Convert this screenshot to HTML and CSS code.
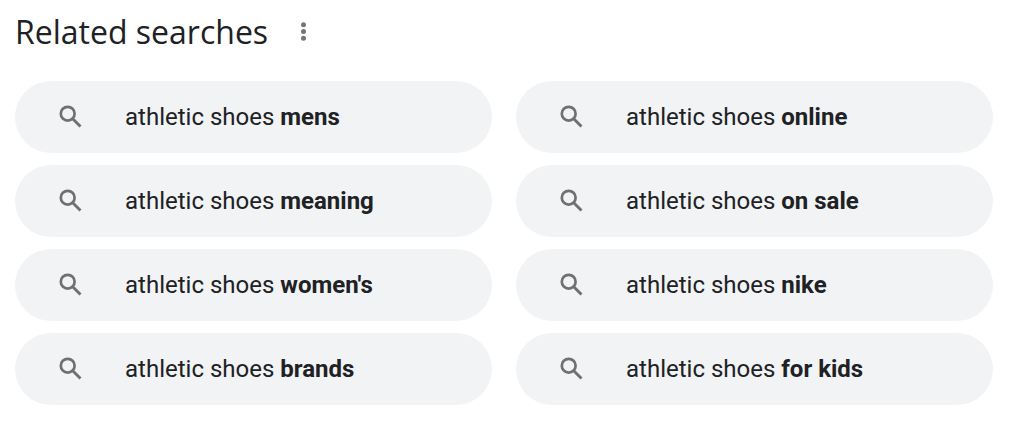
FILE: index.html
```
<!DOCTYPE html>
<html lang="en">
<head>
  <meta charset="UTF-8">
  <meta name="viewport" content="width=device-width, initial-scale=1">
  <title>Related searches</title>
  <link rel="stylesheet" href="styles.css">
</head>
<body>

<svg class="sprite" aria-hidden="true">
  <symbol id="search" viewBox="0 0 30 30">
    <circle cx="11.7" cy="11.7" r="6.9" fill="none" stroke="currentColor" stroke-width="2.7"/>
    <path d="M16.2 16.2l8.3 8.3" fill="none" stroke="currentColor" stroke-width="2.9"/>
  </symbol>
</svg>

<section class="related">
  <header class="related-header">
    <h2>Related searches</h2>
    <button class="more" type="button" aria-label="About this result">
      <svg viewBox="0 0 26 26"><circle cx="13.5" cy="5.7" r="2.5"/><circle cx="13.5" cy="12.5" r="2.5"/><circle cx="13.5" cy="19.3" r="2.5"/></svg>
    </button>
  </header>

  <nav class="searches" aria-label="Related searches">
    <a class="pill" href="#"><svg><use href="#search"/></svg><span>athletic shoes <b>mens</b></span></a>
    <a class="pill" href="#"><svg><use href="#search"/></svg><span>athletic shoes <b>online</b></span></a>
    <a class="pill" href="#"><svg><use href="#search"/></svg><span>athletic shoes <b>meaning</b></span></a>
    <a class="pill" href="#"><svg><use href="#search"/></svg><span>athletic shoes <b>on sale</b></span></a>
    <a class="pill" href="#"><svg><use href="#search"/></svg><span>athletic shoes <b>women's</b></span></a>
    <a class="pill" href="#"><svg><use href="#search"/></svg><span>athletic shoes <b>nike</b></span></a>
    <a class="pill" href="#"><svg><use href="#search"/></svg><span>athletic shoes <b>brands</b></span></a>
    <a class="pill" href="#"><svg><use href="#search"/></svg><span>athletic shoes <b>for kids</b></span></a>
  </nav>
</section>

</body>
</html>
```
FILE: styles.css
```
body {
  margin: 0;
  background: #fff;
  color: #202124;
  font-family: Roboto, Arial, sans-serif;
}

.sprite {
  display: none;
}

.related {
  padding: 12px 19px 18px 15px;
}

.related-header {
  display: flex;
  align-items: center;
  gap: 22px;
  margin-bottom: 29px;
}

.related-header h2 {
  margin: 0;
  font-family: "Open Sans", Lato, sans-serif;
  font-size: 32px;
  font-weight: 400;
  line-height: 40px;
}

.more {
  display: flex;
  padding: 0;
  border: none;
  background: none;
  cursor: pointer;
}

.more svg {
  width: 26px;
  height: 26px;
  fill: #757575;
}

.searches {
  display: grid;
  grid-template-columns: 1fr 1fr;
  gap: 12px 24px;
}

.pill {
  display: flex;
  align-items: center;
  gap: 39px;
  padding: 20px 41px;
  border-radius: 36px;
  background: #f1f3f4;
  color: #202124;
  font-size: 24px;
  line-height: 32px;
  text-decoration: none;
}

.pill svg {
  flex: none;
  width: 30px;
  height: 30px;
  color: #707070;
}

.pill:hover {
  background: #e8eaed;
}
```
